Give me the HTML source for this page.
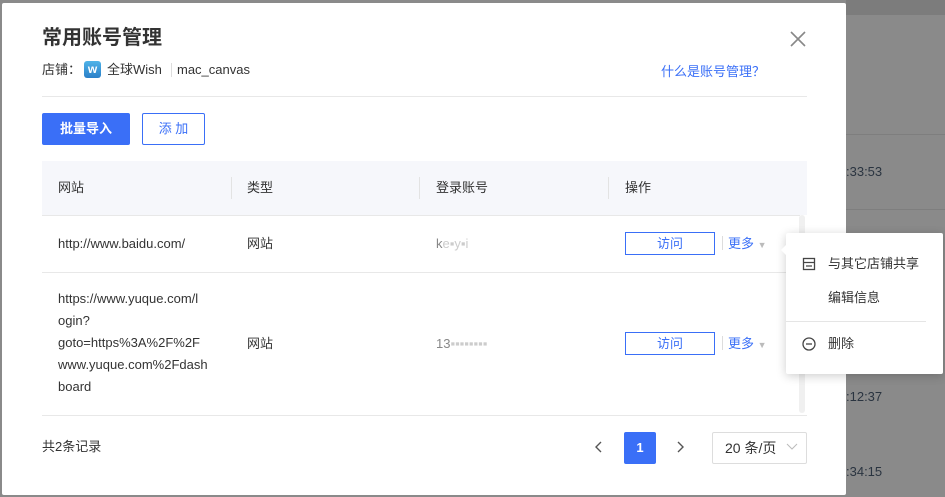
<!DOCTYPE html>
<html><head><meta charset="utf-8"><style>
*{margin:0;padding:0;box-sizing:border-box}
body{width:945px;height:497px;overflow:hidden;background:#8a8a8a;font-family:"Liberation Sans","Noto Sans CJK SC",sans-serif;font-size:13px;color:#333;position:relative;line-height:1.2}
.a{position:absolute}
.bgt{color:#2a3440;font-size:13px}
.modal{left:2px;top:3px;width:844px;height:492px;background:#fff;border-radius:2px}
.hdr{background:#f6f7fb}
.line{background:#e8e8e8;height:1px}
.blue{color:#3a6ff7}
.btnv{width:90px;height:23px;border:1px solid #3a6ff7;color:#3a6ff7;text-align:center;line-height:21px;font-size:13px}
</style></head><body>
<div class="a" style="left:846px;top:0;width:99px;height:15px;background:#7c7c7c"></div>
<div class="a" style="left:846px;top:134px;width:99px;height:1px;background:#7e7e7e"></div>
<div class="a" style="left:846px;top:209px;width:99px;height:1px;background:#7e7e7e"></div>
<div class="a bgt" style="left:846px;top:164px">:33:53</div>
<div class="a bgt" style="left:846px;top:389px">:12:37</div>
<div class="a bgt" style="left:846px;top:464px">:34:15</div>
<div class="a modal">
<div class="a" style="left:40px;top:23px;font-size:20px;font-weight:bold;color:#333">常用账号管理</div>
<svg class="a" style="left:787px;top:27px" width="18" height="18"><path d="M2 2L16 16M16 2L2 16" stroke="#888" stroke-width="1.6"/></svg>
<div class="a" style="left:40px;top:59px;font-size:13px;color:#333">店铺：</div>
<div class="a" style="left:82px;top:58px;width:17px;height:17px;border-radius:3px;background:linear-gradient(#4fb3e8,#2a7fc8);color:#fff;font-size:12px;font-weight:bold;text-align:center;line-height:16px">w</div>
<div class="a" style="left:105px;top:59px;font-size:13px">全球Wish</div>
<div class="a" style="left:169px;top:60px;width:1px;height:14px;background:#ddd"></div>
<div class="a" style="left:175px;top:59px;font-size:13px">mac_canvas</div>
<div class="a blue" style="left:659px;top:61px;font-size:13px">什么是账号管理？</div>
<div class="a line" style="left:40px;top:93px;width:765px"></div>
<div class="a" style="left:40px;top:110px;width:88px;height:32px;background:#3a6ff7;color:#fff;border-radius:2px;text-align:center;line-height:32px;font-weight:bold;font-size:13px">批量导入</div>
<div class="a" style="left:140px;top:110px;width:63px;height:32px;border:1px solid #3a6ff7;border-radius:2px;color:#3a6ff7;text-align:center;line-height:30px;font-size:13px">添 加</div>
<div class="a hdr" style="left:40px;top:158px;width:765px;height:54px"></div>
<div class="a" style="left:56px;top:177px">网站</div>
<div class="a" style="left:229px;top:174px;width:1px;height:22px;background:#e3e3e3"></div>
<div class="a" style="left:245px;top:177px">类型</div>
<div class="a" style="left:417px;top:174px;width:1px;height:22px;background:#e3e3e3"></div>
<div class="a" style="left:434px;top:177px">登录账号</div>
<div class="a" style="left:606px;top:174px;width:1px;height:22px;background:#e3e3e3"></div>
<div class="a" style="left:623px;top:177px">操作</div>
<div class="a line" style="left:40px;top:212px;width:758px"></div>
<div class="a" style="left:56px;top:233px">http://www.baidu.com/</div>
<div class="a" style="left:245px;top:233px">网站</div>
<div class="a" style="left:434px;top:233px;color:#888">k<span style="color:#ccc">e▪y▪i</span></div>
<div class="a btnv" style="left:623px;top:229px">访问</div>
<div class="a" style="left:720px;top:233px;width:1px;height:14px;background:#ddd"></div>
<div class="a blue" style="left:726px;top:233px">更多 <span style="color:#bbb;font-size:9px">▼</span></div>
<div class="a line" style="left:40px;top:269px;width:758px"></div>
<div class="a" style="left:56px;top:285px;line-height:22px;white-space:nowrap">https://www.yuque.com/l<br>ogin?<br>goto=https%3A%2F%2F<br>www.yuque.com%2Fdash<br>board</div>
<div class="a" style="left:245px;top:333px">网站</div>
<div class="a" style="left:434px;top:333px;color:#888">13<span style="color:#ccc">▪▪▪▪▪▪▪▪</span></div>
<div class="a btnv" style="left:623px;top:329px">访问</div>
<div class="a" style="left:720px;top:333px;width:1px;height:14px;background:#ddd"></div>
<div class="a blue" style="left:726px;top:333px">更多 <span style="color:#bbb;font-size:9px">▼</span></div>
<div class="a" style="left:797px;top:212px;width:6px;height:198px;background:#f0f0f0;border-radius:3px"></div>
<div class="a line" style="left:40px;top:412px;width:765px"></div>
<div class="a" style="left:40px;top:436px">共2条记录</div>
<svg class="a" style="left:592px;top:437px" width="10" height="14"><path d="M7 2L2 7L7 12" stroke="#555" fill="none" stroke-width="1.4"/></svg>
<div class="a" style="left:622px;top:429px;width:32px;height:32px;background:#3a6ff7;color:#fff;border-radius:2px;text-align:center;line-height:32px;font-weight:bold">1</div>
<svg class="a" style="left:673px;top:437px" width="10" height="14"><path d="M3 2L8 7L3 12" stroke="#555" fill="none" stroke-width="1.4"/></svg>
<div class="a" style="left:710px;top:429px;width:95px;height:32px;border:1px solid #ddd;border-radius:2px;line-height:30px;padding-left:12px;font-size:14px">20 条/页</div>
<svg class="a" style="left:784px;top:440px" width="12" height="8"><path d="M1 1L6 6L11 1" stroke="#bbb" fill="none"/></svg>
</div>
<div class="a" style="left:786px;top:233px;width:157px;height:141px;background:#fff;border-radius:2px;box-shadow:0 2px 10px rgba(0,0,0,.2)"></div>
<div class="a" style="left:781px;top:245px;width:0;height:0;border:5px solid transparent;border-right-color:#fff;border-left:0"></div>
<svg class="a" style="left:802px;top:257px" width="14" height="14"><rect x="1.5" y="1.5" width="11" height="11" fill="none" stroke="#444" stroke-width="1.3"/><path d="M1.5 5.5H12.5M4 9H10" stroke="#444" stroke-width="1.3"/></svg>
<div class="a" style="left:828px;top:256px;color:#333">与其它店铺共享</div>
<div class="a" style="left:828px;top:290px;color:#333">编辑信息</div>
<div class="a" style="left:786px;top:321px;width:140px;height:1px;background:#e5e5e5"></div>
<svg class="a" style="left:802px;top:337px" width="14" height="14"><circle cx="7" cy="7" r="6" fill="none" stroke="#444" stroke-width="1.3"/><path d="M4 7H10" stroke="#444" stroke-width="1.3"/></svg>
<div class="a" style="left:828px;top:336px;color:#333">删除</div>
</body></html>
